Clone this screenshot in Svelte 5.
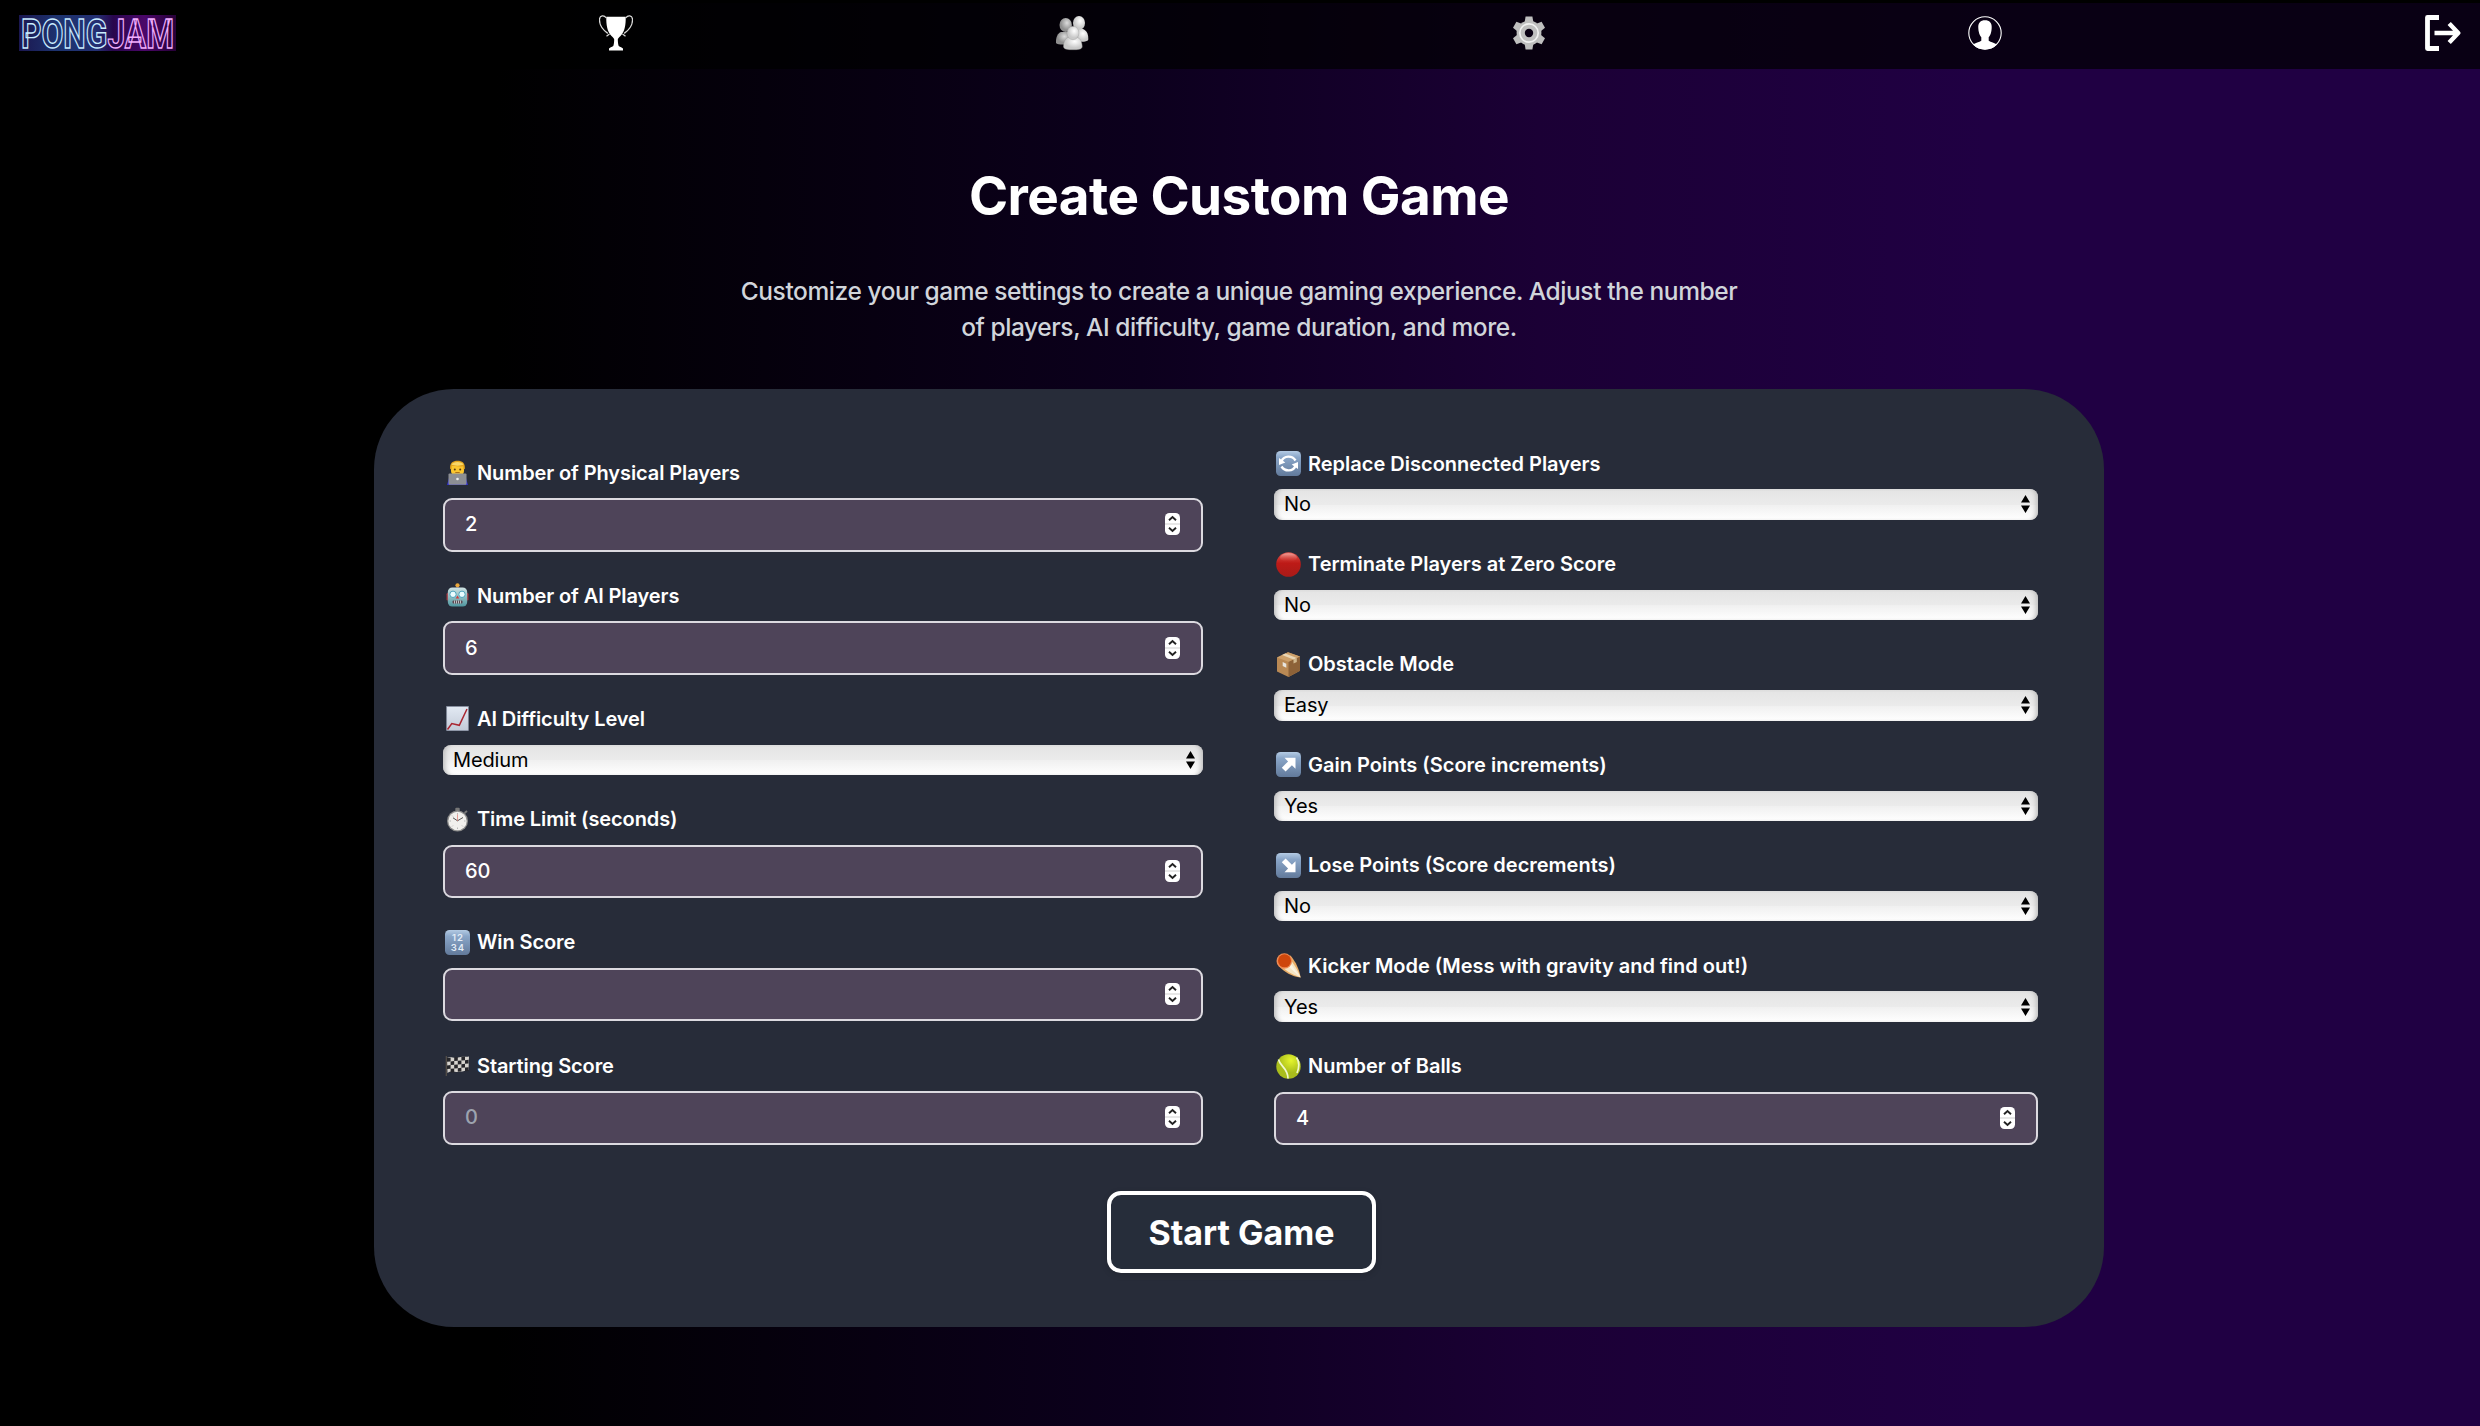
<script lang="ts">
  type Field = { icon: string; label: string; value: string; kind: 'number' | 'select'; placeholder?: string };

  const left: Field[] = [
    { icon: 'coder', label: 'Number of Physical Players', value: '2', kind: 'number' },
    { icon: 'robot', label: 'Number of AI Players', value: '6', kind: 'number' },
    { icon: 'chart', label: 'AI Difficulty Level', value: 'Medium', kind: 'select' },
    { icon: 'watch', label: 'Time Limit (seconds)', value: '60', kind: 'number' },
    { icon: 'digits', label: 'Win Score', value: '', kind: 'number' },
    { icon: 'flag', label: 'Starting Score', value: '', kind: 'number', placeholder: '0' }
  ];

  const right: Field[] = [
    { icon: 'refresh', label: 'Replace Disconnected Players', value: 'No', kind: 'select' },
    { icon: 'red', label: 'Terminate Players at Zero Score', value: 'No', kind: 'select' },
    { icon: 'box', label: 'Obstacle Mode', value: 'Easy', kind: 'select' },
    { icon: 'up', label: 'Gain Points (Score increments)', value: 'Yes', kind: 'select' },
    { icon: 'down', label: 'Lose Points (Score decrements)', value: 'No', kind: 'select' },
    { icon: 'comet', label: 'Kicker Mode (Mess with gravity and find out!)', value: 'Yes', kind: 'select' },
    { icon: 'ball', label: 'Number of Balls', value: '4', kind: 'number' }
  ];

  // Black and white cells of the waving racing flag.
  const flagCells = Array.from({ length: 24 }, (_, i) => ({ c: i % 6, r: Math.floor(i / 6) })).filter(
    (p) => (p.c + p.r) % 2 === 0
  );
</script>

{#snippet glyph(name: string)}
  <svg class="emoji" viewBox="0 0 25 25" aria-hidden="true">
    {#if name === 'coder'}
      <path d="M2 25l2-7h17l2 7z" fill="#2d2fd6" />
      <rect x="6" y="2" width="13" height="14" rx="5" fill="#fbc62f" />
      <path d="M5.200 9C4.500 3 8 .8 12.500.8S20.500 3 19.800 9L18.300 9.500V6.200C15 6.600 10 6.500 6.700 5.800V9.500z" fill="#e3a41c" />
      <path d="M6.500 4.500C8 1 17 1 18.500 4.500c-3 1.500-9 1.500-12 0z" fill="#f9d768" />
      <circle cx="9.800" cy="9.500" r="1" fill="#5a3a12" /><circle cx="15.200" cy="9.500" r="1" fill="#5a3a12" />
      <path d="M10.300 12.500h4.400" stroke="#9b5b16" stroke-width=".8" />
      <rect x="3.500" y="13.500" width="18" height="11.300" rx="1" fill="#8d8f94" />
      <circle cx="12.500" cy="19" r="1.300" fill="#eee" />
    {:else if name === 'robot'}
      <circle cx="12.500" cy="2.300" r="2.100" fill="#e9a63a" />
      <rect x="11.500" y="4" width="2" height="2" fill="#7a5560" />
      <rect x="1.500" y="10" width="3" height="7.500" rx="1.200" fill="#a3343d" /><rect x="20.500" y="10" width="3" height="7.500" rx="1.200" fill="#a3343d" />
      <rect x="2.800" y="4.500" width="19.400" height="19" rx="4.500" fill="url(#steel)" />
      <circle cx="8" cy="11.300" r="3.200" fill="#eafcff" stroke="#4ea3bb" /><circle cx="17" cy="11.300" r="3.200" fill="#eafcff" stroke="#4ea3bb" />
      <path d="M12.500 12.500l1.800 3h-3.600z" fill="#cf3a3c" />
      <rect x="7.500" y="17.500" width="10" height="3" rx="1" fill="#5c4650" />
      <path d="M9.500 17.500v3M11.500 17.500v3M13.500 17.500v3M15.500 17.500v3" stroke="#e5f5f5" stroke-width=".7" />
    {:else if name === 'chart'}
      <rect x="1.700" y=".6" width="21.600" height="24" fill="url(#paper)" stroke="#929bad" stroke-width=".7" />
      <path d="M2.500 23.500l4.300-6 7.500 1.800L22 3" fill="none" stroke="#a92631" stroke-width="1.500" />
    {:else if name === 'watch'}
      <rect x="10.300" y=".7" width="4.400" height="4" rx="1" fill="#777" />
      <path d="M19.500 6l2.500-2" stroke="#777" stroke-width="2" />
      <circle cx="12.500" cy="14" r="10.500" fill="#8d8d8c" /><circle cx="12.500" cy="14" r="9.200" fill="#f1f0ed" />
      <path d="M12.500 6v1.500M12.500 20.500V22M4.500 14H6M19 14h1.500M7 8.500l1 1M18 19.500l-1-1M7 19.500l1-1" stroke="#aaa" stroke-width=".8" />
      <path d="M8 10.800l4.500 3 5.500-3.300" fill="none" stroke="#555" stroke-width="1" /><path d="M12.500 14V7.500" stroke="#e0776d" stroke-width=".7" />
    {:else if name === 'flag'}
      <path d="M1.300 3v20" stroke="#565149" stroke-width="1.200" />
      <path d="M2 5c4-2 7 1 11-.5S20 4 24 3.500L23.500 17c-4 .5-6 2-10.500 2S6 17.500 2.500 20z" fill="#d6d3cd" />
      <g transform="translate(2 5) skewY(-5)">
        {#each flagCells as p}<rect x={p.c * 3.6} y={p.r * 3.7} width="3.600" height="3.700" fill="#26262a" />{/each}
      </g>
    {:else if name === 'red'}
      <circle cx="12.500" cy="12.500" r="12.300" fill="url(#ruby)" />
      <ellipse cx="12.500" cy="5.500" rx="8.500" ry="4.300" fill="url(#sheen)" />
    {:else if name === 'box'}
      <path d="M1 5.500L12 .3 24 4.500v14.300L12.500 25 1 19.500z" fill="#b98954" />
      <path d="M12.500 9.800L24 4.500v14.300L12.500 25z" fill="#8d6238" />
      <path d="M1 5.500L12 .3l12 4.200-11.500 5.300z" fill="#cda06a" />
      <path d="M6 3.100l3.300-1.500 11.500 4.300-3.300 1.700z" fill="#e9d6b5" /><path d="M17.500 7.600l3.300-1.700v4l-3.300 1.700z" fill="#d1b88e" />
      <path d="M6.700 10l3.600 1.800v4l-3.600-1.700z" fill="#e7e5df" />
    {:else if name === 'comet'}
      <path d="M3 13L14.500 2.500C20 9 23.500 17 24.600 24.500 16 23.500 8 19 3 13z" fill="#eaae68" />
      <path d="M7 14.500l8-7c4 5 8 12 9.600 17C18 22 11 19 7 14.500z" fill="#f6e6c4" />
      <path d="M12 13l12.600 11.500L15 11" fill="#fffaf0" opacity=".7" />
      <circle cx="8.300" cy="8" r="7.800" fill="#ee8a52" /><circle cx="8.500" cy="7.800" r="6.500" fill="#ce470c" />
    {:else if name === 'ball'}
      <circle cx="12.500" cy="12.500" r="12.200" fill="url(#felt)" />
      <path d="M2.500 5.500C4 12.500 12 14 12 24.500M20.500 3.500c3.200 4.500 2.500 10.500.5 15.500" fill="none" stroke="#f1f8cf" stroke-width="1.700" />
    {:else}
      <rect x="0" y="0" width="25" height="25" rx="4.500" fill="url(#key)" />
      {#if name === 'digits'}
        <text x="13" y="11" class="digits">12</text><text x="13" y="20.500" class="digits">34</text>
      {:else if name === 'refresh'}
        <path d="M5.500 10C8 4.500 16 4 19.500 9.500M19.500 15C17 20.500 9 21 5.500 15.500" fill="none" stroke="#fff" stroke-width="2.400" />
        <path d="M3 7v7l6.300-2.400zM22 18v-7l-6.300 2.400z" fill="#fff" />
      {:else if name === 'up'}
        <path d="M8.500 5.800h11v11l-3.600-3.600-6.300 6.300-3.800-3.800 6.300-6.300z" fill="#fff" />
      {:else}
        <path d="M19.500 8.200v11h-11l3.600-3.600-6.300-6.300 3.800-3.800 6.300 6.300z" fill="#fff" />
      {/if}
    {/if}
  </svg>
{/snippet}

{#snippet fieldRow(f: Field)}
  <div class="field">
    <label class="label" for={f.icon}>{@render glyph(f.icon)}<span>{f.label}</span></label>
    {#if f.kind === 'number'}
      <div class="control">
        <input class="number" id={f.icon} type="number" value={f.value} placeholder={f.placeholder} />
        <svg class="stepper" viewBox="0 0 15 22" aria-hidden="true">
          <rect width="15" height="22" rx="4.500" fill="#fff" />
          <path d="M0 11h15" stroke="#cfcfcf" stroke-width="1" />
          <path d="M4 7.200l3.500-3.200 3.500 3.200M4 14.800l3.500 3.200 3.500-3.200" fill="none" stroke="#222" stroke-width="1.900" />
        </svg>
      </div>
    {:else}
      <div class="control">
        <select class="select" id={f.icon}><option>{f.value}</option></select>
        <svg class="arrows" viewBox="0 0 9 18" aria-hidden="true"><path d="M0 7.500L4.500 0 9 7.500zM0 10.500h9L4.500 18z" /></svg>
      </div>
    {/if}
  </div>
{/snippet}

<svg class="defs" aria-hidden="true">
  <defs>
    <linearGradient id="key" x2="0" y2="1"><stop offset="0" stop-color="#b4cbe4" /><stop offset=".25" stop-color="#8aa6c8" /><stop offset="1" stop-color="#627a9b" /></linearGradient>
    <linearGradient id="steel" x2="0" y2="1"><stop offset="0" stop-color="#cfe3e4" /><stop offset="1" stop-color="#4f969f" /></linearGradient>
    <linearGradient id="paper" x2="0" y2="1"><stop offset="0" stop-color="#e2e9f3" /><stop offset="1" stop-color="#c3cbd8" /></linearGradient>
    <linearGradient id="ruby" x2="0" y2="1"><stop offset="0" stop-color="#e0564e" /><stop offset=".45" stop-color="#bd1a17" /><stop offset="1" stop-color="#a81b18" /></linearGradient>
    <linearGradient id="sheen" x2="0" y2="1"><stop offset="0" stop-color="#f7b9b2" stop-opacity=".8" /><stop offset="1" stop-color="#d8403a" stop-opacity="0" /></linearGradient>
    <radialGradient id="felt" cx=".6" cy=".25"><stop offset="0" stop-color="#e5f52e" /><stop offset="1" stop-color="#a9bd1c" /></radialGradient>
    <radialGradient id="pearl" cx=".6" cy=".35"><stop offset="0" stop-color="#fff" /><stop offset="1" stop-color="#c9c9c9" /></radialGradient>
    <radialGradient id="smoke" cx=".6" cy=".35"><stop offset="0" stop-color="#dcdcdc" /><stop offset="1" stop-color="#8f8f8f" /></radialGradient>
    <linearGradient id="sign"><stop offset="0" stop-color="#1b1750" /><stop offset=".25" stop-color="#1d3470" /><stop offset=".5" stop-color="#242f72" /><stop offset=".6" stop-color="#29064d" /><stop offset=".8" stop-color="#4b0769" /><stop offset="1" stop-color="#270038" /></linearGradient>
    <linearGradient id="tube" gradientUnits="userSpaceOnUse" x1="0" y1="0" x2="157" y2="0"><stop offset=".562" stop-color="#c9efff" /><stop offset=".562" stop-color="#f4b0ff" /></linearGradient>
    <filter id="glow" x="-10%" y="-20%" width="120%" height="140%"><feGaussianBlur stdDeviation="1.500" /></filter>
  </defs>
</svg>

<div class="page">
  <nav class="nav">
    <svg class="logo" viewBox="0 0 157 36" role="img" aria-label="PongJam">
      <rect width="157" height="36" fill="url(#sign)" />
      <g filter="url(#glow)">
        <path d="M4 18h82" stroke="#2f74b8" stroke-width="24" opacity=".35" /><path d="M92 18h60" stroke="#9d1fc0" stroke-width="24" opacity=".25" />
      </g>
      <text class="neon" x="2" y="32.800" textLength="153" lengthAdjust="spacingAndGlyphs">PONGJAM</text>
    </svg>

    <svg class="icon" viewBox="0 0 34 36" aria-hidden="true">
      <path d="M7.300 1.800h19.400c.2 8-.9 15-5.200 19.200-1.600 1.500-2.600 2.400-2.700 3.400.1 2.600.2 4.600.9 6.600 1.600.9 3.600 1.700 4.300 2.500v2H10v-2c.700-.8 2.700-1.600 4.300-2.500.7-2 .8-4 .9-6.600-.1-1-1.100-1.900-2.700-3.400C8.200 16.800 7.100 9.800 7.300 1.800z" fill="#fff" />
      <path d="M7.300 3C5-.3.800.2.500 4.200.200 10 4 15 8.800 18.400M7.500 21.300l3-2.300M26.700 3c2.300-3.300 6.500-2.800 6.800 1.200.3 5.800-3.500 10.800-8.300 14.200M26.500 21.300l-3-2.300" fill="none" stroke="#d8d8d8" stroke-width="1.300" />
    </svg>

    <svg class="icon" viewBox="0 0 34 36" aria-hidden="true">
      <path d="M1 28c-.3-5 1.500-10 5-11h8l1 12c-4 .8-13 1-14-1z" fill="url(#smoke)" /><ellipse cx="10.700" cy="10" rx="6.200" ry="7" fill="url(#smoke)" />
      <path d="M20 14h8c4 1.500 5.700 6 5.200 11-1 2-8 2.300-12 1z" fill="url(#pearl)" /><ellipse cx="24" cy="8" rx="6" ry="7" fill="url(#pearl)" />
      <path d="M8.500 32c0-5 2-9 5-9.800h8.500c3 .8 5.200 4.800 5.200 9.800-.8 2.500-4 2.700-9.200 2.700s-8.700-.2-9.500-2.700z" fill="url(#pearl)" stroke="#999" stroke-width=".4" /><ellipse cx="18" cy="18" rx="6" ry="6.700" fill="url(#pearl)" stroke="#999" stroke-width=".4" />
    </svg>

    <svg class="icon" viewBox="0 0 34 36" aria-hidden="true">
      <g fill="#bfbfbf"><circle cx="17" cy="18" r="12.400" />
        {#each [0, 60, 120, 180, 240, 300] as a}<path d="M12.400 8.500l1.200-7h6.800l1.200 7z" transform="rotate({a} 17 18)" />{/each}
      </g>
      <circle cx="17" cy="18" r="9.200" fill="none" stroke="#f1f1f1" stroke-width="1.700" /><circle cx="17" cy="18" r="4.200" fill="#090013" />
    </svg>

    <svg class="icon" viewBox="0 0 34 36" aria-hidden="true">
      <circle cx="17" cy="18" r="16.200" fill="none" stroke="#fff" stroke-width="1.100" />
      <path d="M17 5.200c4.500 0 7 2.600 6.700 7.500-.1 1.700-.2 2.800-.5 4.100-.4 2.400-1.500 4.200-2.500 5.500v3.500c2 1.600 6 1.900 8.300 3.800A16.400 16.400 0 0 1 17 34.500 16.400 16.400 0 0 1 5 29.600c2.300-1.900 6.300-2.200 8.300-3.800v-3.500c-1-1.300-2.100-3.100-2.500-5.500-.3-1.300-.4-2.400-.5-4.100C10 7.800 12.500 5.200 17 5.200z" fill="#fff" />
    </svg>

    <svg class="icon exit" viewBox="0 0 36 36" aria-hidden="true">
      <path d="M14 2.500H2.500v31H14" fill="none" stroke="#fff" stroke-width="4.800" stroke-linejoin="round" />
      <path d="M9.500 18h22M24.200 8.500l9 9.500-9 9.500" fill="none" stroke="#fff" stroke-width="4.500" stroke-linejoin="round" />
    </svg>
  </nav>

  <main class="main">
    <h1 class="title">Create Custom Game</h1>
    <p class="intro">Customize your game settings to create a unique gaming experience. Adjust the number<br />of players, AI difficulty, game duration, and more.</p>

    <form class="card">
      <div class="columns">
        <div class="column first">{#each left as f}{@render fieldRow(f)}{/each}</div>
        <div class="column">{#each right as f}{@render fieldRow(f)}{/each}</div>
      </div>
      <div class="actions"><button class="start" type="button">Start Game</button></div>
    </form>
  </main>
</div>

<style>
  :global(body) { background: #000; }
  .page {
    box-sizing: border-box;
    width: 2480px;
    height: 1426px;
    overflow: hidden;
    font-family: Inter, 'Liberation Sans', sans-serif;
    color: #fff;
    background: linear-gradient(to right, #000 20%, #0c001d 46%, #1b0035 62%, #200043 80%);
  }
  .defs { display: block; width: 0; height: 0; }
  .nav {
    display: flex;
    justify-content: space-between;
    align-items: center;
    box-sizing: border-box;
    height: 69px;
    padding: 0 19px;
    border-top: 3px solid #000;
    background: rgba(0, 0, 0, 0.7);
  }
  .logo { width: 157px; height: 36px; margin-bottom: 6px; overflow: visible; }
  .icon { width: 34px; height: 36px; margin-bottom: 6px; }
  .exit { width: 36px; }
  .neon { font: 700 41px Roboto, sans-serif; fill: none; stroke: url(#tube); stroke-width: 1.4px; }
  .main { padding: 97px 0 0 374px; }
  .title {
    width: 1730px;
    margin: 0 0 47px;
    font-size: 53px;
    line-height: 60px;
    font-weight: 700;
    text-align: center;
    letter-spacing: -0.55px;
  }
  .intro {
    width: 1730px;
    margin: 0 0 44px;
    font-size: 24.5px;
    font-weight: 450;
    line-height: 36px;
    text-align: center;
    letter-spacing: -0.42px;
    color: #d1d5db;
  }
  .card {
    box-sizing: border-box;
    width: 1730px;
    height: 938px;
    padding: 60.6px 66px 0 69px;
    border-radius: 80px;
    background: #272c39;
  }
  .columns { display: grid; grid-template-columns: 760px 764px; column-gap: 71px; }
  .column { display: flex; flex-direction: column; gap: 30.35px; }
  .first { padding-top: 9px; gap: 30.2px; }
  .label {
    display: flex;
    align-items: center;
    gap: 7px;
    height: 28px;
    margin-bottom: 11.6px;
    padding-left: 2px;
    font-size: 20px;
    line-height: 28px;
    font-weight: 600;
    white-space: nowrap;
  }
  .first .label { letter-spacing: -0.1px; }
  .emoji { width: 25px; height: 25px; flex: none; }
  .digits { font: 600 9.5px Inter, sans-serif; fill: #e4edf7; text-anchor: middle; letter-spacing: 1px; }
  .control { display: grid; align-items: center; }
  .control > * { grid-area: 1 / 1; }
  .number {
    box-sizing: border-box;
    width: 100%;
    height: 53.4px;
    margin: 0;
    padding: 0 20px 1px;
    border: 2px solid #dcdae0;
    border-radius: 9px;
    outline: none;
    background: #4e4459;
    color: #fff;
    font: 500 20px Inter, sans-serif;
    appearance: textfield;
  }
  .number::-webkit-inner-spin-button { display: none; }
  .number::placeholder { color: #9ca3af; opacity: 1; }
  .stepper { width: 15px; height: 22px; justify-self: end; margin: 0 23px 1px 0; }
  .select {
    box-sizing: border-box;
    width: 100%;
    height: 30.5px;
    margin: 0;
    padding: 0 10px;
    border: 0;
    border-radius: 8px;
    background: linear-gradient(#e4e4e4, #ebebeb 50%, #f0f0f0 51%, #fff);
    box-shadow: inset 5px 0 5px -3px #bbb, inset -5px 0 5px -3px #bbb;
    color: #000;
    font: 400 20px Inter, sans-serif;
    letter-spacing: -0.15px;
    appearance: none;
  }
  .arrows { width: 9px; height: 18px; justify-self: end; margin-right: 8px; }
  .actions { display: flex; justify-content: center; padding: 46px 0 0 2px; }
  .start {
    box-sizing: border-box;
    width: 269px;
    height: 82px;
    padding: 0;
    border: 4px solid #fff;
    border-radius: 14px;
    background: #262d3a;
    box-shadow: 0 2px 6px rgba(0, 0, 0, 0.15);
    color: #fff;
    font: 700 34px Inter, sans-serif;
  }
</style>
